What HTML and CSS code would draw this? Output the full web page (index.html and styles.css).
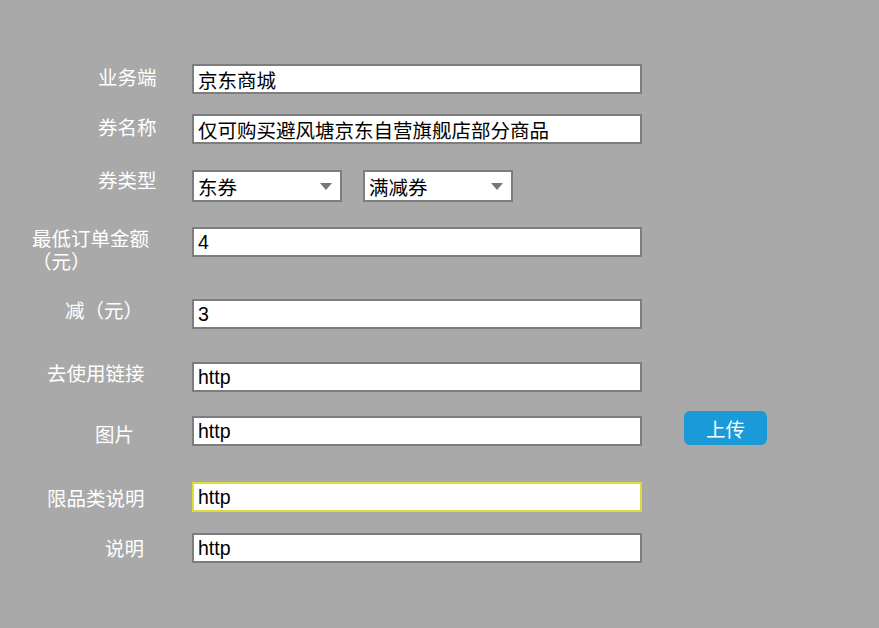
FILE: index.html
```html
<!DOCTYPE html>
<html lang="zh-CN">
  <head>
    <meta charset="UTF-8" />
    <meta name="viewport" content="width=device-width, initial-scale=1.0" />
    <title>优惠券</title>
    <link rel="stylesheet" href="styles.css">
  </head>
  <body>
    <form class="coupon-form">
      <div class="row row-platform">
        <label class="label">业务端</label>
        <input class="field" type="text" value="京东商城" />
      </div>

      <div class="row row-name">
        <label class="label">券名称</label>
        <input class="field" type="text" value="仅可购买避风塘京东自营旗舰店部分商品" />
      </div>

      <div class="row row-type">
        <label class="label">券类型</label>
        <div class="select-group">
          <div class="select">
            <span>东券</span>
            <span class="arrow"></span>
          </div>
          <div class="select">
            <span>满减券</span>
            <span class="arrow"></span>
          </div>
        </div>
      </div>

      <div class="row row-min">
        <label class="label">最低订单金额（元）</label>
        <input class="field" type="text" value="4" />
      </div>

      <div class="row row-minus">
        <label class="label">减（元）</label>
        <input class="field" type="text" value="3" />
      </div>

      <div class="row row-link">
        <label class="label">去使用链接</label>
        <input class="field" type="text" value="http" />
      </div>

      <div class="row row-pic">
        <label class="label">图片</label>
        <input class="field" type="text" value="http" />
        <button class="upload" type="button">上传</button>
      </div>

      <div class="row row-limit">
        <label class="label">限品类说明</label>
        <input class="field field-active" type="text" value="http" />
      </div>

      <div class="row row-desc">
        <label class="label">说明</label>
        <input class="field" type="text" value="http" />
      </div>
    </form>
  </body>
</html>
```

FILE: styles.css
```css
body {
  margin: 0;
  background: #a9a9a9;
  font-family: "Liberation Sans", "Noto Sans CJK SC", sans-serif;
  font-size: 19.5px;
}
.coupon-form {
  padding-top: 64px;
}
.row {
  display: flex;
  align-items: flex-start;
}
.label {
  box-sizing: border-box;
  width: 192px;
  flex-shrink: 0;
  color: #fff;
  line-height: 23px;
}
.field {
  box-sizing: border-box;
  width: 450px;
  height: 30px;
  margin: 0;
  padding: 0 4px;
  border: 2px solid #7d7d7d;
  background: #fff;
  color: #000;
  font-family: inherit;
  font-size: inherit;
  outline: none;
}
.field-active {
  border-color: #dedb3c;
}
.select-group {
  display: flex;
  gap: 21px;
}
.select {
  box-sizing: border-box;
  width: 150px;
  height: 32px;
  padding: 0 8px 0 4px;
  border: 2px solid #7d7d7d;
  background: #fff;
  display: flex;
  align-items: center;
  justify-content: space-between;
}
.arrow {
  width: 0;
  height: 0;
  border-left: 6px solid transparent;
  border-right: 6px solid transparent;
  border-top: 7px solid #777;
}
.upload {
  margin: -5px 0 0 42px;
  width: 83px;
  height: 34px;
  border: none;
  border-radius: 6px;
  background: #1a9bd7;
  color: #fff;
  font-family: inherit;
  font-size: inherit;
}

/* rows, spacing taken from the design */
.row-platform .label { padding: 3px 0 0 98px; }
.row-name { margin-top: 20px; }
.row-name .label { padding: 3px 0 0 98px; }
.row-type { margin-top: 26px; }
.row-type .label { padding: 0 0 0 98px; }
.row-min { margin-top: 25px; height: 30px; }
.row-min .label { padding: 1px 38px 0 32px; }
.row-minus { margin-top: 42px; }
.row-minus .label { padding: 1px 0 0 65px; }
.row-link { margin-top: 33px; }
.row-link .label { padding: 1px 0 0 47px; }
.row-pic { margin-top: 24px; }
.row-pic .label { padding: 8px 0 0 95px; }
.row-limit { margin-top: 35px; }
.row-limit .label { padding: 6px 0 0 47px; }
.row-desc { margin-top: 21px; }
.row-desc .label { padding: 5px 0 0 105px; }
```
